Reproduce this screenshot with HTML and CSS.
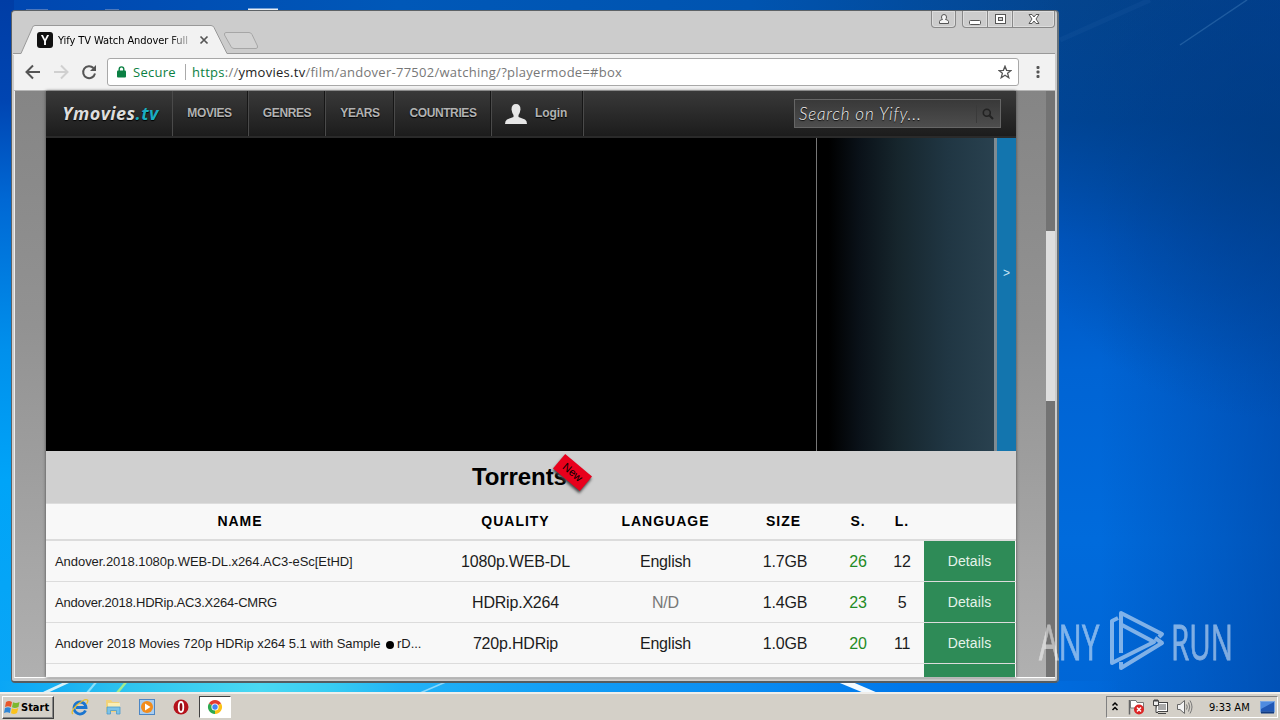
FILE: index.html
```html
<!DOCTYPE html>
<html lang="en">
<head>
    <meta charset="UTF-8">
    <meta name="viewport" content="width=device-width, initial-scale=1.0">
    <title>Yify TV Watch Andover Full</title>
    <link rel="stylesheet" href="styles.css">
</head>
<body>
    <!-- light streaks of the wallpaper -->
    <svg class="wallpaper" width="1280" height="720" viewBox="0 0 1280 720">
        <path d="M1180 45L1247 0" stroke="#4a86c0" stroke-width="1.500" opacity=".4"/>
        <path d="M1060 40L1150 0" stroke="#2b66ad" stroke-width="5" opacity=".15"/>
        <path d="M44 693L70 681" stroke="#d5f2fb" stroke-width="3"/>
        <path d="M87 693L97 681" stroke="#8fe0f8" stroke-width="2"/>
        <path d="M117 693L127 681" stroke="#a5ec8c" stroke-width="2.500"/>
        <path d="M420 693L448 681" stroke="#8cd8fb" stroke-width="1.500"/>
        <path d="M835 681L850 681L878 693L864 693Z" fill="#f2faff"/>
        <path d="M26 10h22M105 10h14" stroke="#9aa8c8" stroke-width="1"/>
        <path d="M248 9.500h30" stroke="#e8eef5" stroke-width="2"/>
    </svg>

    <div class="window">
        <div class="titlebar">
            <svg class="tabshape" width="250" height="30" viewBox="0 0 250 30">
                <path d="M0 28.500H8L19.500 2.500Q20 .5 22 .5H198Q200 .5 201 2.500L214 28.500H250V30H0Z" fill="#f2f2f2"/>
                <path d="M0 28.500H8L19.500 2.500Q20 .5 22 .5H198Q200 .5 201 2.500L214 28.500H250" fill="none" stroke="#999"/>
                <path d="M213 7.500H236Q238 7.500 239 9.500L244.500 21Q245 23.500 243 23.500H221Q219 23.500 218 21.500L211.500 10Q211 7.500 213 7.500Z" fill="#d2d2d2" stroke="#a6a6a6"/>
            </svg>
            <div class="tab">
                <span class="favicon"><span>Y</span></span>
                <span class="tab-title">Yify TV Watch Andover Full</span>
                <svg width="10" height="10" viewBox="0 0 10 10"><path d="M1.500 1.500l7 7M8.500 1.500l-7 7" stroke="#555" stroke-width="1.700"/></svg>
            </div>
            <div class="controls">
                <span class="control profile">
                    <svg width="12" height="12" viewBox="0 0 12 12"><path d="M1.500 10.500V8.500Q2 6.500 4.500 6.500Q3.500 5.500 3.500 4Q3.500 1.500 6 1.500Q8.500 1.500 8.500 4Q8.500 5.500 7.500 6.500Q10 6.500 10.500 8.500V10.500Z" fill="#f5f5f5" stroke="#555"/></svg>
                </span>
                <span class="control min">
                    <svg width="12" height="12" viewBox="0 0 12 12"><rect x=".5" y="7.500" width="11" height="4" rx="1" fill="#fff" stroke="#555"/></svg>
                </span>
                <span class="control max">
                    <svg width="13" height="12" viewBox="0 0 13 12"><rect x="1.500" y="1.500" width="10" height="9" fill="#fff" stroke="#555"/><rect x="4.500" y="4.500" width="4" height="3" fill="#ccc" stroke="#555"/></svg>
                </span>
                <span class="control close">
                    <svg width="12" height="12" viewBox="0 0 12 12"><path d="M1 1.500H4L6 4L8 1.500H11L8 6L11 10.500H8L6 8L4 10.500H1L4 6Z" fill="#fff" stroke="#555"/></svg>
                </span>
            </div>
        </div>

        <div class="toolbar">
            <svg width="86" height="20" viewBox="0 0 86 20" fill="none" stroke="#555" stroke-width="2">
                <path d="M15 10H2M8 3.500L1.500 10L8 16.500"/>
                <path d="M29 10H42M36 3.500L42.500 10L36 16.500" stroke="#d0d0d0"/>
                <path d="M68.500 6A6 6 0 1 0 70 11.500"/>
                <path d="M71 3V9H65Z" fill="#555" stroke="none"/>
            </svg>
            <div class="omnibox">
                <svg width="9" height="12" viewBox="0 0 9 12"><path d="M2.200 5V3.200a2.300 2.300 0 0 1 4.600 0V5" fill="none" stroke="#0b8043" stroke-width="1.400"/><rect y="4.500" width="9" height="7" rx="1" fill="#0b8043"/></svg>
                <span class="secure">Secure</span>
                <span class="url"><span class="scheme">https</span>://<b>ymovies.tv</b>/film/andover-77502/watching/?playermode=#box</span>
                <svg class="star" width="14" height="14" viewBox="0 0 14 14"><path d="M7 1.200L8.600 5.300L13 5.500L9.600 8.300L10.800 12.700L7 10.200L3.200 12.700L4.400 8.300L1 5.500L5.400 5.300Z" fill="none" stroke="#555" stroke-width="1.300"/></svg>
            </div>
            <svg width="4" height="14" viewBox="0 0 4 14" fill="#555"><rect x=".5" y="1" width="3" height="3" rx="1"/><rect x=".5" y="5.500" width="3" height="3" rx="1"/><rect x=".5" y="10" width="3" height="3" rx="1"/></svg>
        </div>

        <div class="page">
            <div class="site">
                <div class="nav">
                    <div class="logo">Ymovies<span>.tv</span></div>
                    <div class="item movies">MOVIES</div>
                    <div class="item genres">GENRES</div>
                    <div class="item years">YEARS</div>
                    <div class="item countries">COUNTRIES</div>
                    <div class="item login">
                        <svg width="22" height="20" viewBox="0 0 22 20"><path d="M11 0Q15.500 0 15.500 5.500Q15 9 13.500 11V13L20 15.500Q22 16.500 22 20H0Q0 16.500 2 15.500L8.500 13V11Q7 9 6.500 5.500Q6.500 0 11 0Z" fill="#e6e6e6"/></svg>
                        Login
                    </div>
                    <div class="search">
                        <span class="placeholder">Search on Yify...</span>
                        <span class="search-btn">
                            <svg width="12" height="12" viewBox="0 0 12 12"><circle cx="4.800" cy="4.800" r="3.500" fill="none" stroke="#222" stroke-width="1.600"/><path d="M7.500 7.500l3.500 3.500" stroke="#222" stroke-width="2"/></svg>
                        </span>
                    </div>
                </div>

                <div class="player">
                    <div class="video"></div>
                    <div class="shade"></div>
                    <div class="expand">&gt;</div>
                </div>

                <div class="heading">Torrents<span class="new">New</span></div>

                <div class="torrents">
                    <div class="row head">
                        <span>NAME</span><span>QUALITY</span><span>LANGUAGE</span><span class="size">SIZE</span><span>S.</span><span>L.</span><span></span>
                    </div>
                    <div class="row">
                        <span class="name">Andover.2018.1080p.WEB-DL.x264.AC3-eSc[EtHD]</span><span>1080p.WEB-DL</span><span>English</span><span>1.7GB</span><span class="seeds">26</span><span>12</span><span class="details">Details</span>
                    </div>
                    <div class="row">
                        <span class="name tight">Andover.2018.HDRip.AC3.X264-CMRG</span><span>HDRip.X264</span><span class="nd">N/D</span><span>1.4GB</span><span class="seeds">23</span><span>5</span><span class="details">Details</span>
                    </div>
                    <div class="row">
                        <span class="name">Andover 2018 Movies 720p HDRip x264 5.1 with Sample <i class="face"></i>rD...</span><span>720p.HDRip</span><span>English</span><span>1.0GB</span><span class="seeds">20</span><span>11</span><span class="details">Details</span>
                    </div>
                    <div class="row last">
                        <span></span><span></span><span></span><span></span><span></span><span></span><span class="details"></span>
                    </div>
                </div>
            </div>
            <div class="scrollbar"><div class="thumb"></div></div>
        </div>
    </div>

    <div class="taskbar">
        <div class="start">
            <svg width="16" height="16" viewBox="0 0 16 16">
                <path d="M2 3Q5 1 8 3L7 8Q4 6.500 1 8Z" fill="#e8572a"/>
                <path d="M9 3.300Q12 5 15.500 3L14.500 8Q11 10 8 8.300Z" fill="#7cb82f"/>
                <path d="M1 9Q4 7.500 6.800 9L6 14Q3 12.500 0 14Z" fill="#2f86d6"/>
                <path d="M7.800 9.300Q11 11 14.300 9L13 14Q10 16 7 14.300Z" fill="#fbc21c"/>
            </svg>
            Start
        </div>
        <div class="quick">
            <svg width="18" height="18" viewBox="0 0 18 18">
                <path d="M14.500 12.500A6 6 0 1 1 15 9.500H5" fill="none" stroke="#1b75cf" stroke-width="2.800"/>
                <path d="M2 16Q-1 14 6 7Q14 0 16.500 2Q17.500 3 15.500 6" fill="none" stroke="#e9bf2f" stroke-width="1.300"/>
            </svg>
            <svg width="18" height="18" viewBox="0 0 18 18">
                <path d="M1 2H6L7.500 4H14V14H1Z" fill="#f1d27a"/><path d="M3 5H15V12H3Z" fill="#faeeb5"/>
                <path d="M2 9H15V16H11.500V12.500H5.500V16H2Z" fill="#7dc3e8" stroke="#4d9bcb" stroke-width=".8"/>
            </svg>
            <svg width="18" height="18" viewBox="0 0 18 18">
                <rect x="1.500" y="1.500" width="15" height="15" fill="#a9cdf0" stroke="#4c86c4"/>
                <circle cx="9" cy="9" r="6" fill="#f28c1c"/><path d="M7 5.500L12.500 9L7 12.500Z" fill="#fff"/>
            </svg>
            <svg width="18" height="18" viewBox="0 0 18 18">
                <circle cx="9" cy="9" r="7.500" fill="#b5121b"/><ellipse cx="9" cy="9" rx="3" ry="5.500" fill="#8e0b13"/><ellipse cx="9" cy="9" rx="2.300" ry="5" fill="none" stroke="#fff" stroke-width="1.800"/>
            </svg>
        </div>
        <div class="task">
            <svg width="16" height="16" viewBox="0 0 16 16">
                <path d="M8 8L1.900 4.500A7 7 0 0 1 14.100 4.500Z" fill="#e33b2e"/>
                <path d="M8 8L14.100 4.500A7 7 0 0 1 8 15Z" fill="#fbc116"/>
                <path d="M8 8L8 15A7 7 0 0 1 1.900 4.500Z" fill="#2da94f"/>
                <circle cx="8" cy="8" r="3.600" fill="#fff"/><circle cx="8" cy="8" r="2.700" fill="#4285f4"/>
            </svg>
        </div>
        <div class="tray">
            <svg width="8" height="12" viewBox="0 0 8 12"><path d="M1.500 4.500L4 2L6.500 4.500M1.500 9L4 6.500L6.500 9" fill="none" stroke="#000" stroke-width="1.500"/></svg>
            <svg class="flag" width="18" height="16" viewBox="0 0 18 16">
                <path d="M1.500 1V15.500" stroke="#666" stroke-width="1.500"/><path d="M2.500 1.500H8L9 3.500H15.500V10.500H9L8 9H2.500Z" fill="#fff" stroke="#777"/>
                <circle cx="11" cy="10.500" r="5" fill="#dc2525"/><path d="M9 8.500l4 4M13 8.500l-4 4" stroke="#fff" stroke-width="1.500"/>
            </svg>
            <svg class="net" width="17" height="16" viewBox="0 0 17 16">
                <rect x="4.500" y="3.500" width="11" height="9" fill="#a9a9a9" stroke="#444"/><rect x="5.500" y="4.500" width="9" height="7" fill="none" stroke="#fff"/>
                <path d="M6 14.500H14" stroke="#444"/><path d="M1.500 1.500H6.500V6.500H1.500ZM4 6.500V13.500H6" fill="#eee" stroke="#444"/><path d="M3 0V3M5 0V3" stroke="#444"/>
            </svg>
            <svg class="volume" width="17" height="16" viewBox="0 0 17 16">
                <path d="M1.500 5.500H4L8.500 1.500V14.500L4 10.500H1.500Z" fill="#f4f4f4" stroke="#666"/>
                <path d="M10.500 5.500Q12 8 10.500 10.500M12.500 3.500Q15 8 12.500 12.500M14 1.500Q18 8 14 14.500" fill="none" stroke="#777"/>
            </svg>
            <span class="clock">9:33 AM</span>
            <svg width="15" height="13" viewBox="0 0 15 13"><rect x=".5" y=".5" width="14" height="10.500" fill="#2158b5" stroke="#7ba7e3"/><path d="M1 1H14L1 8Z" fill="#4f8be0"/><path d="M1 11.500H14" stroke="#113a80" stroke-width="2"/></svg>
        </div>
    </div>

    <!-- watermark over the desktop -->
    <div class="watermark">
        <span class="any">ANY</span>
        <svg width="56" height="62" viewBox="0 0 56 62" fill="none" stroke="#fff" stroke-width="4" stroke-linejoin="round">
            <path d="M9 8L3 11V53L45 32L13 15"/>
            <path d="M12 43V3L53 24L50 27"/>
            <path d="M12 52V58L53 33L46 28"/>
        </svg>
        <span class="run">RUN</span>
    </div>
</body>
</html>
```
FILE: styles.css
```css
* {
    box-sizing: border-box;
}

body {
    margin: 0;
    width: 1280px;
    height: 720px;
    overflow: hidden;
    position: relative;
    display: flex;
    flex-direction: column;
    justify-content: space-between;
    font-family: "Liberation Sans", Arial, sans-serif;
    background:
        linear-gradient(90deg, #0aa6f6 0, #18b0f2 60px, #2fc4ee 130px, #4ad8f2 260px, #38ccf2 330px, #22b4f6 400px, #149ff5 550px, #0a8cf2 750px, #0078ea 900px, #006adc 1070px, rgba(0, 106, 220, 0) 1120px) 0 681px / 1280px 12px no-repeat,
        linear-gradient(180deg, #003da5 0, #0045b2 100px, #0068d4 200px, #0090ec 350px, #00a4f8 480px, #0aa6f6 690px) 0 0 / 14px 720px no-repeat,
        linear-gradient(90deg, #0046b0 0, #0058b8 400px, #0054b0 750px, rgba(0, 72, 155, 0) 1060px) 0 0 / 1280px 12px no-repeat,
        radial-gradient(circle at 1280px 140px, rgba(0, 58, 125, 0.7) 0, rgba(0, 64, 140, 0) 280px),
        linear-gradient(90deg, rgba(0, 60, 150, 0) 1100px, rgba(0, 60, 150, 0.5) 1280px),
        linear-gradient(180deg, #04458f 0, #004699 120px, #0056c0 240px, #0064d4 370px, #006bdc 540px, #0066d6 693px);
}

.wallpaper {
    position: absolute;
    left: 0;
    top: 0;
}

.window {
    position: relative;
    width: 1048px;
    height: 673px;
    margin: 10px 0 0 11px;
    border: 1px solid #5d6266;
    border-right: 2px solid #66717a;
    border-bottom: 2px solid #555c60;
    border-radius: 4px;
    background: #ccc;
    padding: 0 2px 3px 2px;
    overflow: hidden;
}

.titlebar {
    height: 43px;
    position: relative;
    display: flex;
    justify-content: space-between;
    border-bottom: 1px solid #999;
}

.tabshape {
    position: absolute;
    left: -1px;
    top: 14px;
}

.tab {
    position: relative;
    display: flex;
    align-items: center;
    margin: 18px 0 0 23px;
    height: 22px;
}

.favicon {
    width: 16px;
    height: 16px;
    border-radius: 3px;
    background: #111;
    color: #fff;
    font: bold 15px/16px "Liberation Sans", Arial, sans-serif;
    text-align: center;
}

.favicon span {
    display: block;
    transform: scaleX(0.85);
}

.tab-title {
    width: 134px;
    margin: 0 7px 0 5px;
    font-family: "DejaVu Sans Condensed", "DejaVu Sans", sans-serif;
    font-stretch: condensed;
    font-size: 11px;
    letter-spacing: -0.08px;
    white-space: nowrap;
    overflow: hidden;
    background: linear-gradient(90deg, #000 110px, #aaa 131px);
    -webkit-background-clip: text;
    background-clip: text;
    color: transparent;
}

.controls {
    display: flex;
    height: 17px;
}

.control {
    display: flex;
    align-items: center;
    justify-content: center;
    border: 1px solid #888;
    border-top: 0;
    box-shadow: inset 0 0 0 1px #ddd;
}

.profile {
    width: 25px;
    margin-right: 6px;
    border-radius: 0 0 4px 4px;
}

.min {
    width: 26px;
    border-radius: 0 0 0 4px;
}

.max {
    width: 25px;
    border-left: 0;
}

.close {
    width: 42px;
    border-left: 0;
    border-radius: 0 0 4px 0;
}

.toolbar {
    height: 37px;
    display: flex;
    align-items: center;
    background: #f2f2f2;
    border-bottom: 1px solid #b6b6b6;
    padding: 0 15px 0 11px;
}

.omnibox {
    width: 912px;
    height: 28px;
    margin: 0 17px 0 -4px;
    border: 1px solid #a8a8a8;
    border-radius: 3px;
    background: #fff;
    display: flex;
    align-items: center;
    padding: 0 6px 0 9px;
    font-family: "Open Sans", sans-serif;
    font-size: 13px;
    flex-shrink: 0;
}

.secure {
    margin-left: 7px;
    width: 53px;
    color: #0b8043;
    border-right: 1px solid #aaa;
    line-height: 16px;
    letter-spacing: 0.25px;
}

.url {
    margin-left: 6px;
    color: #777;
    letter-spacing: 0.27px;
}

.url b {
    color: #222;
    font-weight: normal;
}

.scheme {
    color: #0b8043;
}

.star {
    margin-left: auto;
}

.page {
    height: 587px;
    display: flex;
    justify-content: space-between;
    background: linear-gradient(#858585, #929292 40%, #b0b0b0);
    padding-left: 31px;
    border-left: 1px solid #eee;
    border-bottom: 1px solid #fff;
}

.site {
    width: 970px;
    height: 586px;
    overflow: hidden;
    background: #f8f8f8;
    box-shadow: 0 0 3px #444;
}

.nav {
    height: 47px;
    display: flex;
    background: linear-gradient(#393939, #1c1c1c);
    border-bottom: 2px solid #2a2a2a;
    color: #b2b2b2;
    font-weight: bold;
    font-size: 12px;
    letter-spacing: -0.4px;
    line-height: 45px;
    text-align: center;
    text-shadow: 0 1px 1px #000;
}

.logo {
    width: 127px;
    padding-left: 3px;
    font: italic bold 18px/44px "Open Sans", sans-serif;
    color: #ddd;
    letter-spacing: 0.45px;
    border-right: 1px solid #4a4a4a;
}

.logo span {
    color: #1badc0;
}

.item {
    border-right: 1px solid #4a4a4a;
    box-shadow: inset -1px 0 #161616;
}

.movies {
    width: 76px;
    padding-right: 2px;
}

.genres {
    width: 77px;
}

.years {
    width: 69px;
}

.countries {
    width: 97px;
}

.login {
    width: 92px;
    display: flex;
    align-items: center;
    gap: 8px;
    padding-left: 13px;
    letter-spacing: -0.1px;
}

.search {
    width: 207px;
    height: 29px;
    margin: 8px 15px 0 auto;
    display: flex;
    justify-content: space-between;
    align-items: center;
    border: 1px solid #666;
    background: linear-gradient(#393939, #4d4d4d);
    padding: 0 6px 0 4px;
}

.placeholder {
    font: italic 300 17px/26px Lato, "Open Sans", sans-serif;
    color: #eee;
    letter-spacing: 0.8px;
}

.search-btn {
    display: flex;
    padding: 3px 0 3px 5px;
    border-left: 1px solid #3a3a3a;
}

.player {
    height: 313px;
    display: flex;
    background: #000;
}

.video {
    width: 771px;
    border-right: 1px solid #777;
}

.shade {
    flex: 1;
    background: linear-gradient(90deg, #000 0, #000 12px, #0a1118 42px, #16252c 80px, #203643 130px, #29414f 100%);
    border-right: 3px solid #7f8b92;
}

.expand {
    width: 19px;
    background: #1375ae;
    color: #c8e5f5;
    font-size: 12px;
    text-align: center;
    line-height: 271px;
}

.heading {
    height: 52px;
    background: #d0d0d0;
    padding-left: 426px;
    font-weight: bold;
    font-size: 24px;
    line-height: 52px;
    letter-spacing: -0.1px;
    position: relative;
}

.new {
    position: absolute;
    left: 509px;
    top: 12px;
    width: 35px;
    height: 19px;
    background: #e8001c;
    box-shadow: 1px 2px 3px #444;
    transform: rotate(40deg);
    font-weight: normal;
    font-size: 11px;
    line-height: 19px;
    text-align: center;
    letter-spacing: 0;
}

.row {
    display: grid;
    grid-template-columns: 388px 163px 137px 102px 44px 44px 92px;
    grid-template-rows: 40px;
    height: 41px;
    border-bottom: 1px solid #dcdcdc;
    font-size: 16px;
    line-height: 41px;
    text-align: center;
    letter-spacing: -0.2px;
    color: #1c1c1c;
}

.row.head {
    height: 38px;
    border-top: 1px solid #ddd;
    border-bottom: 2px solid #dcdcdc;
    font-weight: bold;
    font-size: 14px;
    line-height: 35px;
    letter-spacing: 1px;
    color: #000;
}

.head .size {
    padding-right: 3px;
}

.row .name {
    padding-left: 9px;
    text-align: left;
    font-size: 13px;
    letter-spacing: -0.05px;
    white-space: nowrap;
}

.row .tight {
    letter-spacing: -0.22px;
}

.face {
    display: inline-block;
    width: 8px;
    height: 8px;
    margin: 0 3px -1px 2px;
    border-radius: 50%;
    background: #000;
}

.seeds {
    color: #1f8b24;
}

.nd {
    color: #777;
}

.row .details {
    margin-right: 1px;
    background: #2e8b57;
    color: #e5f3ea;
    font-size: 14px;
    letter-spacing: 0.1px;
}

.scrollbar {
    width: 9px;
    background: #737373;
    padding-top: 140px;
}

.thumb {
    height: 170px;
    background: #dedede;
}

.taskbar {
    position: relative;
    height: 28px;
    display: flex;
    align-items: center;
    background: #d4d0c8;
    border-top: 2px solid #f0eeea;
    padding-left: 2px;
}

.start {
    width: 52px;
    height: 23px;
    display: flex;
    align-items: center;
    gap: 1px;
    padding-left: 1px;
    border: 1px solid;
    border-color: #fff #404040 #404040 #fff;
    box-shadow: inset -1px -1px #888;
    font: bold 11px "DejaVu Sans Condensed", "DejaVu Sans", sans-serif;
    font-stretch: condensed;
}

.quick {
    display: flex;
    gap: 15.500px;
    margin-left: 17px;
}

.task {
    width: 32px;
    height: 22px;
    margin-left: 9px;
    display: flex;
    align-items: center;
    justify-content: center;
    background: #fff;
    border: 1px solid;
    border-color: #404040 #fff #fff #404040;
}

.tray {
    width: 172px;
    height: 22px;
    margin: 0 2px 0 auto;
    display: flex;
    align-items: center;
    padding-left: 4px;
    border: 1px solid;
    border-color: #808080 #fff #fff #808080;
}

.flag {
    margin-left: 9px;
}

.net {
    margin-left: 6px;
}

.volume {
    margin-left: 7px;
}

.clock {
    width: 43px;
    margin: 0 8px 0 16px;
    font: 11px "DejaVu Sans Condensed", "DejaVu Sans", sans-serif;
    font-stretch: condensed;
    white-space: nowrap;
}

.watermark {
    position: absolute;
    left: 1039px;
    top: 610px;
    height: 62px;
    display: flex;
    align-items: center;
    opacity: 0.5;
    color: #fff;
    -webkit-text-stroke: 0.8px #fff;
    font-family: "Open Sans", sans-serif;
    font-size: 50px;
    line-height: 62px;
}

.watermark svg {
    flex-shrink: 0;
    margin: 0 6px 0 8px;
}

.any,
.run {
    width: 62px;
    transform: scaleX(0.62);
    transform-origin: left;
}

.run {
    transform: scaleX(0.59);
}
```
